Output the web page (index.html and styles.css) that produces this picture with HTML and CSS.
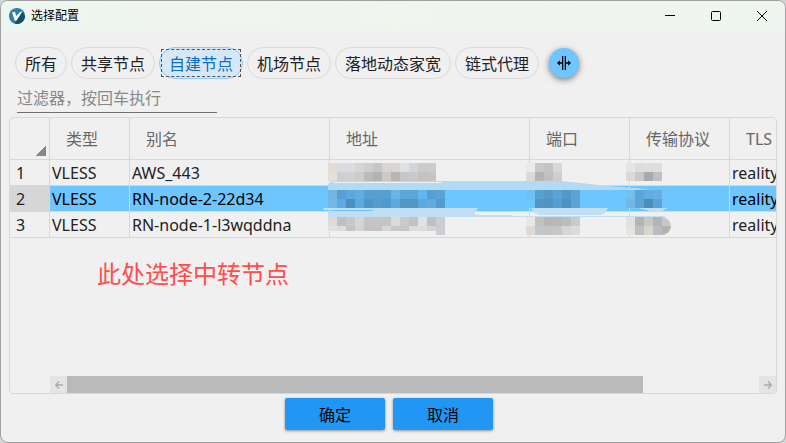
FILE: index.html
```html
<!DOCTYPE html>
<html lang="zh-CN">
<head>
    <meta charset="UTF-8">
    <meta name="viewport" content="width=device-width, initial-scale=1.0">
    <title>选择配置</title>
    <link rel="stylesheet" href="styles.css">
</head>
<body>
    <div class="window">
        <header class="titlebar">
            <svg class="logo" viewBox="0 0 16 16" width="16" height="16">
                <circle cx="8" cy="8" r="8" fill="#2b7fa8"/>
                <path d="M6 15.700A8 8 0 0 0 16 8L13.500 3.600L7 12Z" fill="#12506f"/>
                <path d="M3 4.500L6 3.800L7.200 8L11.500 3.800L13.500 3.600L7.300 12.800H5.800Z" fill="#fff"/>
            </svg>
            <h1>选择配置</h1>
            <div class="window-controls">
                <button type="button" aria-label="最小化"><svg viewBox="0 0 10 10"><path d="M0 4.500H10"/></svg></button>
                <button type="button" aria-label="最大化"><svg viewBox="0 0 10 10"><rect x=".5" y=".5" width="9" height="9" rx="1"/></svg></button>
                <button type="button" aria-label="关闭"><svg viewBox="0 0 10 10"><path d="M0 0L10 10M10 0L0 10"/></svg></button>
            </div>
        </header>

        <nav class="groups">
            <button type="button" class="chip">所有</button>
            <button type="button" class="chip">共享节点</button>
            <button type="button" class="chip selected">自建节点</button>
            <button type="button" class="chip">机场节点</button>
            <button type="button" class="chip">落地动态家宽</button>
            <button type="button" class="chip">链式代理</button>
            <button type="button" class="fit" aria-label="自动调整列宽">
                <svg viewBox="0 0 14 14" width="14" height="14">
                    <path d="M5 0H6.300V14H5ZM7.700 0H9V14H7.700ZM0 7L3 4.200V6.300H5V7.700H3V9.800ZM14 7L11 4.200V6.300H9V7.700H11V9.800Z"/>
                </svg>
            </button>
        </nav>

        <input class="filter" type="text" placeholder="过滤器，按回车执行" aria-label="过滤器">

        <main class="grid">
            <table>
                <colgroup>
                    <col class="col-index"><col class="col-type"><col class="col-wide"><col class="col-wide">
                    <col class="col-mid"><col class="col-mid"><col class="col-mid">
                </colgroup>
                <thead>
                    <tr><th class="corner"></th><th>类型</th><th>别名</th><th>地址</th><th>端口</th><th>传输协议</th><th>TLS</th></tr>
                </thead>
                <tbody>
                    <tr><th>1</th><td>VLESS</td><td>AWS_443</td><td></td><td></td><td></td><td>reality</td></tr>
                    <tr class="active"><th>2</th><td>VLESS</td><td>RN-node-2-22d34</td><td></td><td></td><td></td><td>reality</td></tr>
                    <tr><th>3</th><td>VLESS</td><td>RN-node-1-l3wqddna</td><td></td><td></td><td></td><td>reality</td></tr>
                </tbody>
            </table>

            <!-- 遮住地址、端口和传输协议 -->
            <svg class="mask" viewBox="310 158 370 84" width="370" height="84" aria-hidden="true">
                <g id="strokes">
                    <path fill="#b3daf4" d="M328 190V184L332 181H561L590 184L608 186L636 188L651 190Z"/>
                    <path fill="#f0f0f0" d="M334 182H440L444 183H332Z"/>
                    <path fill="#c2def4" d="M323 208H478L474 214L480 215H512V216H665V217H328V212L332 210H324Z"/>
                    <path fill="#6ec6ff" d="M332 210H373V211H330Z"/>
                    <path fill="#c2def4" d="M531 208H608L605 213L600 215H539L533 212Z"/>
                    <path fill="#c2def4" d="M638 208H668L662 211H650Z"/>
                </g>
                <g id="cells"></g>
            </svg>

            <p class="note">此处选择中转节点</p>

            <div class="scrollbar">
                <button type="button" aria-label="向左"><svg viewBox="0 0 8 8"><path d="M8 4H1M4 .5L.7 4L4 7.500"/></svg></button>
                <div class="track"><div class="thumb"></div></div>
                <button type="button" aria-label="向右"><svg viewBox="0 0 8 8"><path d="M0 4H7M4 .5L7.300 4L4 7.500"/></svg></button>
            </div>
        </main>

        <footer class="actions">
            <button type="button">确定</button>
            <button type="button">取消</button>
        </footer>
    </div>

    <script src="mask.js"></script>
</body>
</html>
```
FILE: styles.css
```css
* {
    box-sizing: border-box;
}
body {
    margin: 0;
    background: #d4d4d4;
    font-family: "Noto Sans", "Noto Sans CJK SC", sans-serif;
    font-size: 16px;
    color: #222;
}
button,
input {
    font: inherit;
    color: inherit;
}
button {
    padding: 0;
    border: none;
    background: none;
}
.window {
    display: flex;
    flex-direction: column;
    min-height: 100vh;
    border: 1px solid #a0a0a0;
    border-radius: 8px;
    background: #f0f0f0;
    overflow: hidden;
}

.titlebar {
    display: flex;
    align-items: center;
    height: 30px;
    padding-left: 8px;
    background: linear-gradient(90deg, #edf6ee, #f2f4ee 50%, #eef4ef);
}
.titlebar h1 {
    margin: 0 0 0 6px;
    font-size: 12px;
    font-weight: 400;
    line-height: 16px;
    color: #000;
}
.window-controls {
    display: flex;
    margin-left: auto;
}
.window-controls button {
    display: flex;
    align-items: center;
    justify-content: center;
    width: 46px;
    height: 30px;
}
.window-controls svg {
    width: 10px;
    height: 10px;
    fill: none;
    stroke: #000;
    overflow: visible;
}

.groups {
    display: flex;
    align-items: center;
    gap: 4px;
    margin: 16px 14px 0;
}
.chip {
    height: 32px;
    padding: 2px 9px 0;
    border: 1px solid #dadada;
    border-radius: 16px;
    line-height: 28px;
    white-space: nowrap;
}
.chip.selected {
    position: relative;
    border-color: #90caf9;
    background: #d6e8f5;
    color: #0d6cc4;
}
.chip.selected::after {
    content: "";
    position: absolute;
    inset: 1px;
    border: 1px dashed #555;
}
.fit {
    display: flex;
    align-items: center;
    justify-content: center;
    width: 30px;
    height: 30px;
    margin-left: 6px;
    border-radius: 50%;
    background: #6ec6ff;
    box-shadow: 0 2px 6px rgba(0, 0, 0, 0.5);
}

.filter {
    width: 200px;
    height: 30px;
    margin: 4px 16px;
    padding: 0;
    border: none;
    border-bottom: 1px solid #707070;
    background: none;
    outline: none;
}
.filter::placeholder {
    color: #888;
    opacity: 1;
}

.grid {
    position: relative;
    display: flex;
    flex: 1;
    flex-direction: column;
    margin: 0 8px;
    border: 1px solid #d8d8d8;
    border-radius: 4px;
    overflow: hidden;
}
table {
    width: 820px;
    table-layout: fixed;
    border-collapse: separate;
    border-spacing: 0;
}
.col-index { width: 40px; }
.col-type { width: 80px; }
.col-wide { width: 200px; }
.col-mid { width: 100px; }
th,
td {
    height: 26px;
    padding: 0 2px;
    border-right: 1px solid #d8d8d8;
    border-bottom: 1px solid #d8d8d8;
    font-weight: 400;
    line-height: 24px;
    text-align: left;
    white-space: nowrap;
}
thead th {
    height: 42px;
    padding: 0 16px;
    color: #666;
}
tbody th {
    padding-left: 6px;
}
.corner {
    background: linear-gradient(135deg, transparent 50%, #888 50%) right 3px bottom 3px / 10px 10px no-repeat;
}
.active th {
    background: #d6d6d6;
}
.active td {
    background: #6ec6ff;
    color: #000;
}

.mask {
    position: absolute;
    top: 40px;
    left: 300px;
}
.note {
    margin: 20px 0 20px 87px;
    font-size: 24px;
    line-height: 32px;
    color: #ff4d4d;
}

.scrollbar {
    display: flex;
    height: 17px;
    margin: auto 0 0 40px;
}
.scrollbar button {
    display: flex;
    align-items: center;
    justify-content: center;
    width: 17px;
    background: #e4e4e4;
}
.scrollbar svg {
    width: 8px;
    height: 8px;
    fill: none;
    stroke: #aaa;
    stroke-width: 1.5;
}
.track {
    flex: 1;
}
.thumb {
    width: 83.3%;
    height: 100%;
    background: #bababa;
}

.actions {
    display: flex;
    justify-content: center;
    gap: 8px;
    padding: 4px 8px 12px 0;
}
.actions button {
    width: 100px;
    height: 32px;
    border-radius: 2px;
    background: #2196f3;
    color: #000;
    box-shadow: 0 1px 3px rgba(0, 0, 0, 0.4);
}
```
FILE: mask.js
```js
// Mosaic over the private columns: x, y of the first cell and the cell colours
const size = 9;
const blocks = [
    [328, 163, ['#e2ddd7', '#d9dde1', '#dadcde', '#d5d5d4', '#cfcfcf', '#c6c7c8', '#d6d5d3', '#dad5cf', '#dce1e5', '#d4d4d4', '#cdcbc8', '#cbcccd']],
    [328, 172, ['#e6dfd6', '#cccfd3', '#cfd1d3', '#cbcccd', '#bdbab5', '#b2b3b5', '#cfcac5', '#b8b5b2', '#c5c7ca', '#c8c9cb', '#c4c2bf', '#c5c4c2']],
    [328, 190, ['#72b6e0', '#559fd5', '#5ca7dc', '#61ade1', '#559fd2', '#559fd2', '#569fd1', '#66b6e8', '#5ba7dc', '#5ba5d8', '#63b6f5', '#569fd2', '#5ba3d5']],
    [328, 199, ['#74b9e5', '#5da9e1', '#4b90bf', '#5ba9df', '#4c96c7', '#559bcb', '#5199cc', '#5fa9dc', '#5197c7', '#5197c7', '#5da9df', '#61abdd', '#529ccd']],
    [328, 217, ['#e0dbd4', '#bec1c4', '#c6c8ca', '#d5d5d5', '#c7c5c3', '#c4c4c4', '#c4c5c7', '#dfdad4', '#c8cacc', '#c5c1bd', '#dee1e5', '#c0c0bf', '#cccdce']],
    [328, 226, ['#e5e0dc', '#dadde1', '#c4c3c2', '#d2d4d6', '#c5c3c1', '#c5c3c1', '#d8d5d2', '#c6c7c8', '#c6c7c8', '#d9dce0', '#dadcde', '#d7d5d2', '#ccced3']],
    [526, 163, ['#eaeaea', '#c9c9c9', '#c5c4c2', '#d7d8da']],
    [526, 172, ['#dcd9d6', '#b4b4b4', '#c1c0bf', '#cdcecf']],
    [526, 190, ['#6ec1f7', '#569fd1', '#559acb', '#5ba3d4', '#519acc', '#5ba2d5']],
    [526, 199, ['#6ec6ff', '#5296c6', '#5094c1', '#559ed1', '#4c91bf', '#5ba2d5']],
    [526, 217, ['#e7e7e7', '#c4c0bb', '#bab7b3', '#b9b8b7', '#bdbdbc', '#c7cace']],
    [526, 226, ['#dfdad6', '#c5c6c8', '#c5c4c2', '#c7c7c7', '#d5d5d6', '#dadcdf']],
    [626, 163, ['#e5e5e5', '#dadcdd', '#dddfdf', '#dddfdf']],
    [626, 172, ['#dcd9d6', '#c5cac9', '#a9a9a9', '#bec0c4']],
    [626, 190, ['#72c0ee', '#5aa4d7', '#61ade1', '#62afe4']],
    [626, 199, ['#74b7e4', '#5ba4d5', '#4b8dba', '#5ba2d5']],
    [626, 217, ['#e3e0dd', '#b3b4b7', '#cbc7bf', '#b1b4ba', '#c8c7c5']],
    [626, 226, ['#e7e4df', '#bfc0c2', '#d6d5cf', '#b9bbbf', '#b5b2ae']]
];

const cells = document.getElementById('cells');
blocks.forEach(([x, y, colors]) => {
    colors.forEach((color, i) => {
        const last = colors.length === 5 && i === 4;
        const cell = document.createElementNS('http://www.w3.org/2000/svg', 'path');
        const left = x + i * size;
        // the stroke ends with a round tip in the protocol column
        if (last && y === 217) {
            cell.setAttribute('d', `M${left} ${y}A9 9 0 0 1 ${left + 9} ${y + 9}H${left}Z`);
        } else if (last) {
            cell.setAttribute('d', `M${left} ${y}H${left + 9}A9 9 0 0 1 ${left} ${y + 9}Z`);
        } else {
            const height = x === 328 && y === 226 && i < 12 ? 5 : size;
            cell.setAttribute('d', `M${left} ${y}h${size}v${height}h-${size}Z`);
        }
        cell.setAttribute('fill', color);
        cells.appendChild(cell);
    });
});
```
